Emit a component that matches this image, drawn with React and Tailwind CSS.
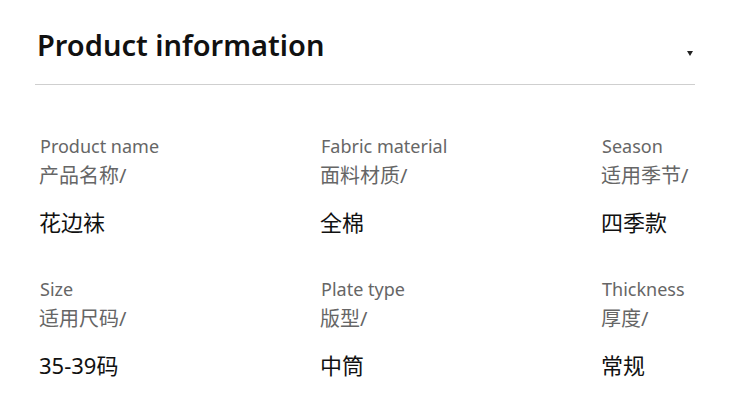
import React from "react";

const items = [
  { en: "Product name", zh: "产品名称/", value: "花边袜" },
  { en: "Fabric material", zh: "面料材质/", value: "全棉" },
  { en: "Season", zh: "适用季节/", value: "四季款" },
  { en: "Size", zh: "适用尺码/", value: "35-39码" },
  { en: "Plate type", zh: "版型/", value: "中筒" },
  { en: "Thickness", zh: "厚度/", value: "常规" },
];

export default function App() {
  return (
    <div
      className="w-[750px] h-[418px] bg-white overflow-hidden"
      style={{ fontFamily: '"Noto Sans", "Noto Sans CJK SC", sans-serif' }}
    >
      <div className="mx-[35px] w-[660px] h-[85px] border-b border-[#cfcfcf] flex items-start justify-between pt-[26px]">
        <h1 className="ml-[2px] text-[29px] leading-[38px] font-semibold text-[#111]">
          Product information
        </h1>
        <span className="mt-[25px] mr-[2px] w-0 h-0 border-l-[3px] border-r-[3px] border-t-[5px] border-l-transparent border-r-transparent border-t-[#222]" />
      </div>
      <div className="ml-[39px] grid grid-cols-[281px_281px_150px] gap-y-[38px] pt-[47px]">
        {items.map((it) => (
          <div key={it.en} className="flex flex-col">
            <div className="ml-[1px] text-[18px] leading-[29px] text-[#666]">{it.en}</div>
            <div className="text-[20px] leading-[29px] text-[#666]">{it.zh}</div>
            <div className="mt-[17px] text-[22px] leading-[30px] text-[#111]">{it.value}</div>
          </div>
        ))}
      </div>
    </div>
  );
}
